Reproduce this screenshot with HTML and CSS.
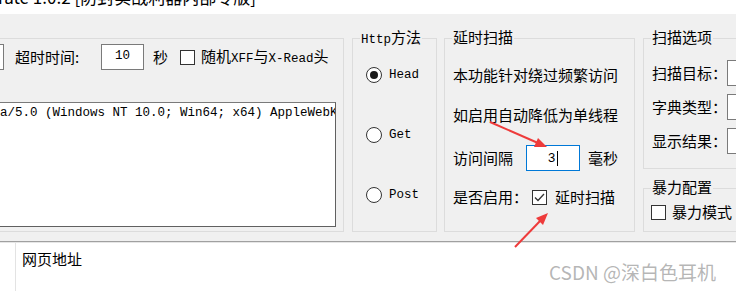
FILE: index.html
```html
<!DOCTYPE html>
<html lang="zh-CN">
<head>
    <meta charset="UTF-8">
    <title>Brute 1.0.2</title>
    <link rel="stylesheet" href="styles.css">
</head>
<body>
    <div class="caption"><span class="caption-text">rate 1.0.2 [防封实战利器内部专版]</span></div>

    <div class="panel">
        <!-- request settings -->
        <div class="group group-request">
            <div class="row">
                <div class="edit edit-cut"></div>
                <span class="label-timeout">超时时间:</span>
                <div class="edit edit-num mono">10</div>
                <span class="label-sec">秒</span>
                <span class="check"></span>
                <span class="check-label">随机<span class="mono">XFF</span>与<span class="mono">X-Read</span>头</span>
            </div>
            <div class="textarea mono">Mozilla/5.0 (Windows NT 10.0; Win64; x64) AppleWebKit/537.36 (KHTML, like Gecko)</div>
        </div>

        <!-- http method -->
        <div class="group group-method">
            <span class="group-title"><span class="mono">Http</span>方法</span>
            <div class="radio-row"><span class="radio checked"></span><span class="mono">Head</span></div>
            <div class="radio-row"><span class="radio"></span><span class="mono">Get</span></div>
            <div class="radio-row"><span class="radio"></span><span class="mono">Post</span></div>
        </div>

        <!-- delay scan -->
        <div class="group group-delay">
            <span class="group-title">延时扫描</span>
            <div class="row">本功能针对绕过频繁访问</div>
            <div class="row row-2">如启用自动降低为单线程</div>
            <div class="row row-3">
                <span>访问间隔</span>
                <div class="edit edit-focus">3<span class="caret"></span></div>
                <span class="label-ms">毫秒</span>
            </div>
            <div class="row row-4">
                <span>是否启用：</span>
                <span class="check checked">
                    <svg width="13" height="13" viewBox="0 0 13 13"><polyline points="2,6.5 5,9.5 11,3" fill="none" stroke="#333" stroke-width="1.3"/></svg>
                </span>
                <span class="check-label">延时扫描</span>
            </div>
        </div>

        <div class="side">
            <div class="group group-scan">
                <span class="group-title">扫描选项</span>
                <div class="row"><span class="side-label">扫描目标：</span><div class="edit edit-side"></div></div>
                <div class="row"><span class="side-label">字典类型：</span><div class="edit edit-side"></div></div>
                <div class="row"><span class="side-label">显示结果：</span><div class="edit edit-side"></div></div>
            </div>
            <div class="group group-brute">
                <span class="group-title">暴力配置</span>
                <div class="row">
                    <span class="check"></span>
                    <span class="check-label">暴力模式</span>
                </div>
            </div>
        </div>
    </div>

    <div class="list">
        <div class="list-head">网页地址</div>
    </div>

    <div class="watermark">CSDN @深白色耳机</div>

    <svg class="arrows" width="736" height="291" viewBox="0 0 736 291">
        <line x1="490" y1="122" x2="538" y2="143" stroke="#ee3b3b" stroke-width="2"/>
        <polygon points="547,147 534,147 538,138" fill="#ee3b3b"/>
        <line x1="515" y1="247" x2="541" y2="220" stroke="#ee3b3b" stroke-width="2"/>
        <polygon points="548,213 543,225 536,218" fill="#ee3b3b"/>
    </svg>
</body>
</html>
```

FILE: styles.css
```css
* {
    box-sizing: border-box;
}
body {
    margin: 0;
    width: 736px;
    height: 291px;
    overflow: hidden;
    position: relative;
    background: #fff;
    color: #000;
    font-family: "Noto Sans CJK SC", sans-serif;
    font-size: 15px;
    line-height: 20px;
}
.mono {
    font-family: "Liberation Mono", "Noto Sans CJK SC", monospace;
    font-size: 12.5px;
}

/* title bar, only its lower edge is in view */
.caption {
    height: 14px;
    overflow: hidden;
}
.caption-text {
    display: block;
    margin: -13px 0 0 -2px;
    font-size: 17px;
    line-height: 20px;
    white-space: nowrap;
}

.panel {
    display: flex;
    align-items: flex-start;
    height: 228px;
    padding-top: 24px;
    background: #f0f0f0;
    border-bottom: 1px solid #a0a0a0;
}
.group {
    position: relative;
    flex: none;
    border: 1px solid #dcdcdc;
}
.group-title {
    position: absolute;
    top: -11px;
    left: 7px;
    padding: 0 1px;
    background: #f0f0f0;
    line-height: 18px;
    white-space: nowrap;
}
.row {
    display: flex;
    align-items: center;
    height: 26px;
    white-space: nowrap;
}

.edit {
    background: #fff;
    border: 1px solid #7a7a7a;
    height: 26px;
}
.check {
    display: inline-flex;
    align-items: center;
    justify-content: center;
    width: 15px;
    height: 15px;
    background: #fff;
    border: 1px solid #333;
    flex: none;
}

/* left group */
.group-request {
    margin-left: -60px;
    width: 404px;
    height: 194px;
    padding: 5px 7px 0 9px;
}
.edit-cut {
    width: 54px;
}
.label-timeout {
    width: 86px;
    margin-left: 11px;
}
.edit-num {
    width: 43px;
    text-align: center;
    line-height: 23px;
}
.label-sec {
    margin-left: 9px;
}
.group-request .check {
    margin-left: 12px;
}
.check-label {
    margin-left: 6px;
}
.textarea {
    margin-top: 32px;
    height: 125px;
    padding: 3px 0 0 4px;
    background: #fff;
    border: 1px solid #7a7a7a;
    border-right-color: #606060;
    border-bottom-color: #606060;
    line-height: 15px;
    white-space: nowrap;
    overflow: hidden;
}

/* http method */
.group-method {
    margin-left: 8px;
    width: 85px;
    height: 194px;
    padding: 23px 0 0 13px;
    display: flex;
    flex-direction: column;
    gap: 34px;
}
.radio-row {
    display: flex;
    align-items: center;
    gap: 7px;
    height: 26px;
}
.radio {
    width: 16px;
    height: 16px;
    border: 1px solid #333;
    border-radius: 50%;
    background: #fff;
    display: flex;
    align-items: center;
    justify-content: center;
}
.radio.checked::after {
    content: "";
    width: 8px;
    height: 8px;
    border-radius: 50%;
    background: #1a1a1a;
}

/* delay scan */
.group-delay {
    margin-left: 7px;
    width: 191px;
    height: 194px;
    padding: 23px 0 0 8px;
}
.row-2 {
    margin-top: 14px;
}
.row-3 {
    margin-top: 17px;
}
.row-4 {
    margin-top: 13px;
}
.edit-focus {
    width: 54px;
    margin-left: 13px;
    border-color: #0078d7;
    display: flex;
    align-items: center;
    justify-content: center;
    font-family: "Liberation Sans", sans-serif;
    font-size: 13px;
}
.caret {
    width: 1px;
    height: 15px;
    margin-left: 2px;
    background: #000;
}
.label-ms {
    margin-left: 8px;
}
.group-delay .check {
    margin-left: 4px;
}
.group-delay .check-label {
    margin-left: 8px;
}

/* right column */
.side {
    margin-left: 8px;
    width: 140px;
    flex: none;
}
.group-scan {
    height: 131px;
    padding: 21px 0 0 8px;
    display: flex;
    flex-direction: column;
    gap: 8px;
}
.side-label {
    width: 82px;
}
.edit-side {
    width: 60px;
}
.group-brute {
    margin-top: 19px;
    height: 44px;
    padding: 10px 0 0 7px;
}

.list {
    height: 49px;
    border-top: 1px solid #e6e6e6;
}
.list-head {
    margin-left: 15px;
    height: 100%;
    padding: 6px 0 0 6px;
    border-left: 1px solid #e3e3e3;
}

.watermark {
    position: absolute;
    left: 549px;
    top: 259px;
    color: rgba(150, 150, 150, 0.7);
    font-size: 19px;
    line-height: 26px;
    white-space: nowrap;
}
.arrows {
    position: absolute;
    left: 0;
    top: 0;
    pointer-events: none;
}
```
